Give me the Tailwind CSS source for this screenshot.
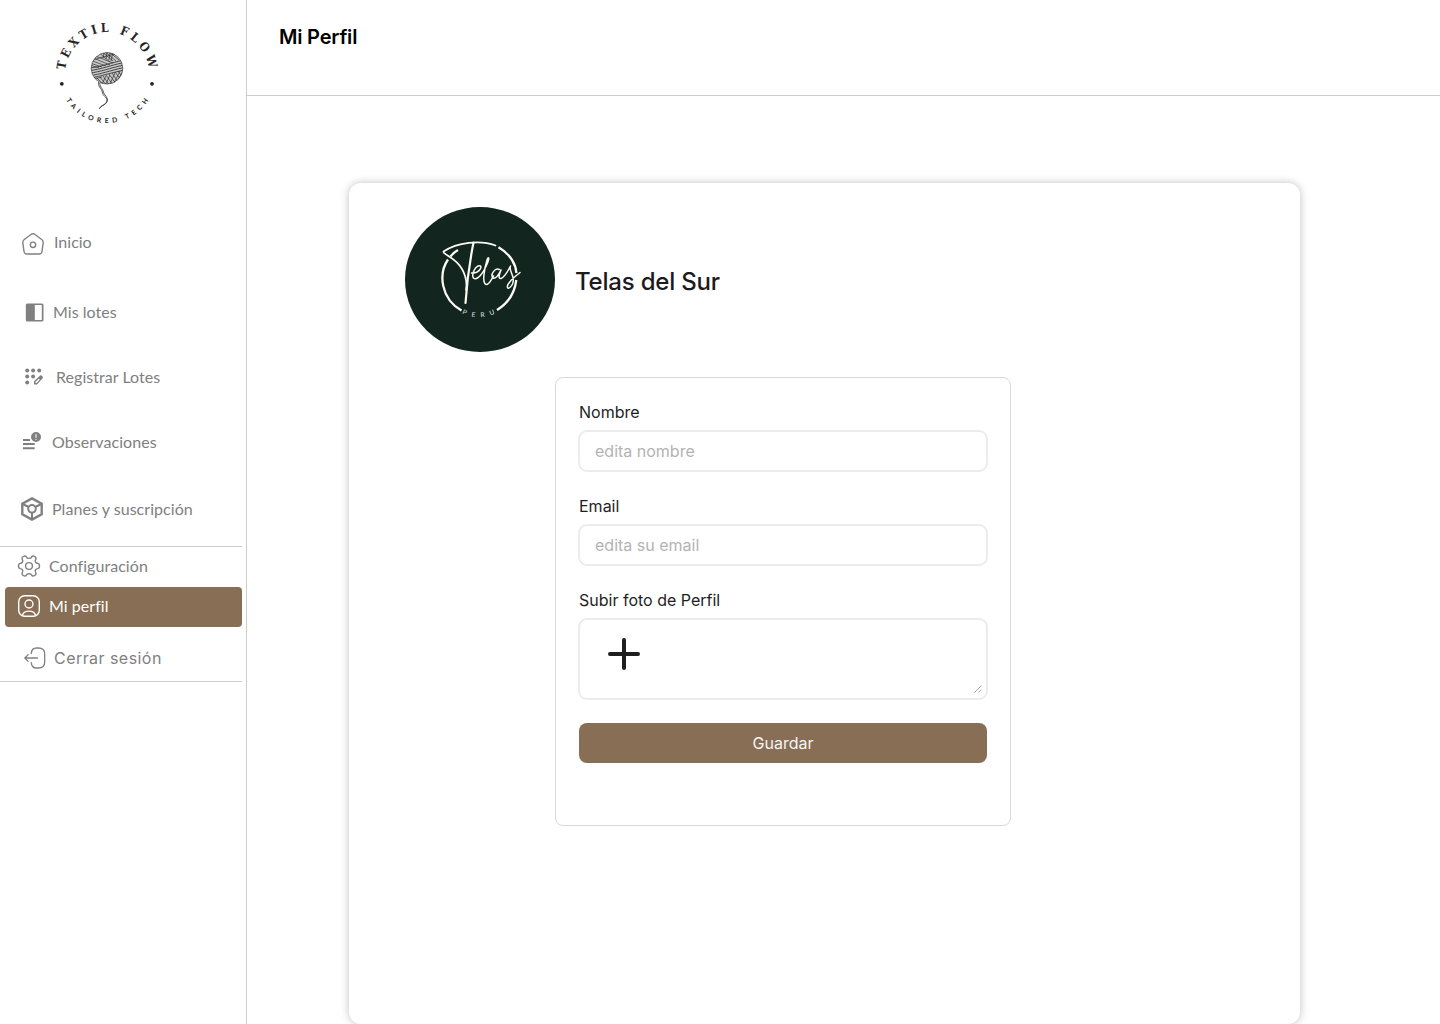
<!DOCTYPE html>
<html lang="es">
<head>
<meta charset="utf-8">
<title>Mi Perfil</title>
<script src="https://cdn.jsdelivr.net/npm/@tailwindcss/browser@4"></script>
</head>
<body class="h-[1024px] w-[1440px] overflow-hidden bg-white flex font-['Inter',sans-serif] text-[#1e1e1e]">

<aside class="w-[247px] h-full shrink-0 border-r border-[#cccccc] flex flex-col text-[#808080]">
  <div class="h-[223px] shrink-0 pl-[47px] pt-[14px]">
    <svg class="w-[120px] h-[120px] text-[#242424]" viewBox="47 14 120 120" fill="none" stroke="currentColor">
      <defs>
        <path id="arcTop" d="M65.300 70A42 42 0 0 1 148.900 70"/>
        <path id="arcBottom" d="M66 100A48.500 48.500 0 0 0 149.500 98.500"/>
        <clipPath id="ball"><circle cx="107" cy="68.300" r="15.800"/></clipPath>
      </defs>
      <text font-family="DejaVu Serif Condensed, DejaVu Serif" font-stretch="condensed" font-weight="bold" font-size="12.300" fill="currentColor" stroke="none"><textPath href="#arcTop" textLength="122" lengthAdjust="spacing">TEXTIL FLOW</textPath></text>
      <text font-family="Lato" font-weight="bold" font-size="6.800" fill="currentColor" stroke="none"><textPath href="#arcBottom" textLength="98" lengthAdjust="spacing">TAILORED TECH</textPath></text>
      <circle cx="61.800" cy="83.800" r="1.900" fill="currentColor" stroke="none"/>
      <circle cx="152" cy="83.800" r="1.900" fill="currentColor" stroke="none"/>
      <g clip-path="url(#ball)" stroke-width=".65">
        <circle cx="107" cy="68.300" r="15.800" fill="#c8c8c8" stroke="none"/>
        <path d="M98 52l12 10M101 51l12 10M104 51l12 10M108 51l11 9M112 51l10 8M116 52l8 7"/>
        <path d="M92 60l30-8M91 57l19 8M90 60l16 6M93 55l20 8M104 53l-1 5M107 52l-1 7M110 52l-1 8M113 52l-2 9"/>
        <path d="M90 68c10-1 20-5 34-8M90 70.500c10-1 20-5 34-8M90 73c10-1 20-5 34-8M90 75.500c10-1 20-5 34-8M91 78c10-2 20-5 33-8" stroke-width=".8"/>
        <path d="M90 63l12 4M90 65l9 3M97 78l7 7M100 77l7 9M103 76l7 10M106 75l7 10M109 74l7 10M112 73l6 9M115 72l6 8M118 71l5 7"/>
        <path d="M101 86l5-10M105 86l5-11M109 86l6-13M113 85l7-14M117 82l6-11M94 79l8-2"/>
      </g>
      <circle cx="107" cy="68.300" r="15.800" stroke-width=".6"/>
      <path d="M98.500 82c0 7 3 5 4 11 1 4 5 4 4.500 8-.4 4-6 4-7.500 7.500M99.700 83c.5 5 3 5 3.700 9 .6 3 4.600 5 4 8.500-.8 4-5 4-8.200 8" stroke-width=".75"/>
    </svg>
  </div>

  <nav class="font-['Lato',sans-serif] text-[16px] flex flex-col">
    <a class="h-10 flex items-center pl-[21px] gap-[9px]">
      <svg class="size-6 mt-0.5" viewBox="0 0 24 24" fill="none" stroke="currentColor" stroke-width="1.400" stroke-linejoin="round"><path d="M10.300 2.300 3 7.700C2 8.500 1.600 9.500 1.800 10.800L3 19.500C3.300 21.300 4.200 22 5.900 22H18.100C19.800 22 20.700 21.300 21 19.500L22.200 10.800C22.400 9.500 22 8.500 21 7.700L13.700 2.300C12.600 1.500 11.400 1.500 10.300 2.300Z"/><circle cx="12" cy="12.800" r="2.700"/></svg>
      <span class="mb-0.5">Inicio</span>
    </a>
    <a class="h-10 mt-[29px] flex items-center pl-[25px] gap-[9px]">
      <svg class="w-[19px] h-[19px] mt-px" viewBox="0 0 19 19" fill="currentColor"><path fill-rule="evenodd" d="M2.300.5h14.700A1.500 1.500 0 0 1 18.500 2v15a1.500 1.500 0 0 1-1.500 1.500h-14.700A1.500 1.500 0 0 1 .8 17V2A1.500 1.500 0 0 1 2.300.5ZM9.800 2v15h7V2Z"/></svg>
      <span class="tracking-[0.03px]">Mis lotes</span>
    </a>
    <a class="h-10 mt-[25px] flex items-center pl-[24px] gap-[12px]">
      <svg class="size-5" viewBox="0 0 20 20" fill="currentColor"><circle cx="3.200" cy="3.500" r="2"/><circle cx="9.100" cy="3.500" r="2"/><circle cx="15.200" cy="3.500" r="2"/><circle cx="3.200" cy="9.500" r="2"/><circle cx="9.100" cy="9.500" r="2"/><circle cx="3.200" cy="15.500" r="2"/><path fill-rule="evenodd" d="M10 17.500v-3.300l6.200-5.800c.8-.6 3.300 1.200 2.700 2.700L13 17.500ZM11.500 16h1.100l3.200-3.500-.9-.8-3.400 3.100Z"/></svg>
      <span class="tracking-[0.04px]">Registrar Lotes</span>
    </a>
    <a class="h-10 mt-[25px] flex items-center pl-[22px] gap-[10px]">
      <svg class="size-5" viewBox="0 0 20 20" fill="currentColor"><path d="M1 7h7v1.900H1zM1 11h11.700v2H1zM1 15.300h11.700v2H1z"/><path fill-rule="evenodd" d="M14 0a5 5 0 1 0 0 10A5 5 0 0 0 14 0Zm-.5 2h1v4h-1Zm0 4.900h1V8h-1Z"/></svg>
      <span class="tracking-[0.08px]">Observaciones</span>
    </a>
    <a class="h-10 mt-[28px] flex items-center pl-[20px] gap-[8px]">
      <svg class="size-6 -mt-0.5" viewBox="0 0 24 24" fill="none" stroke="currentColor" stroke-width="2.400"><path d="M12 1.400 21.700 6.700V17.300L12 22.600 2.300 17.300V6.700Z"/><circle cx="12" cy="11.800" r="3.800" stroke-width="2"/><path d="m2.500 7 6.300 3M21.500 7l-6.300 3M12 15.500V22" stroke-width="2"/></svg>
      <span class="tracking-[0.05px] mb-0.5">Planes y suscripción</span>
    </a>
    <div class="w-[242px] mt-4 border-t border-[#cccccc]"></div>
    <a class="h-10 flex items-center pl-[17px] gap-[8px]">
      <svg class="size-6 -mt-0.5" viewBox="0 0 24 24" fill="none" stroke="currentColor" stroke-width="1.400" stroke-linejoin="round"><path d="M9.500 3.200C10 4.700 14 4.700 14.500 3.200 15 1.600 16.500 1.700 17.700 2.500 19 3.300 19.400 4.300 18.600 5.600 17.500 7.700 19 9.300 20.800 9.400 22.300 9.600 22.500 10.500 22.500 12S22.300 14.400 20.800 14.600C19 14.700 17.500 16.300 18.600 18.400 19.400 19.700 19 20.700 17.700 21.500 16.500 22.300 15 22.400 14.500 20.800 14 19.300 10 19.300 9.500 20.800 9 22.400 7.500 22.300 6.300 21.500 5 20.700 4.600 19.700 5.400 18.400 6.500 16.300 5 14.700 3.200 14.600 1.700 14.400 1.500 13.500 1.500 12S1.700 9.600 3.200 9.400C5 9.300 6.500 7.700 5.400 5.600 4.600 4.300 5 3.300 6.300 2.500 7.500 1.700 9 1.600 9.500 3.200Z"/><circle cx="12" cy="12" r="3.400"/></svg>
      <span class="tracking-[0.05px] mb-0.5">Configuración</span>
    </a>
    <a class="h-10 w-[237px] ml-[5px] rounded bg-[#876e54] text-white flex items-center pl-[12px] gap-[8px]">
      <svg class="size-6 -mt-0.5" viewBox="0 0 24 24" fill="none" stroke="currentColor" stroke-width="1.400" stroke-linecap="round"><rect x="1.700" y="1.700" width="20.600" height="20.600" rx="6"/><circle cx="12" cy="10" r="4"/><path d="M5.500 21.500C6.500 15.600 17.500 15.600 18.500 21.500"/></svg>
      <span class="tracking-[0.05px] mb-0.5">Mi perfil</span>
    </a>
    <a class="h-10 mt-[11px] flex items-center pl-[23px] gap-[7px] font-['Inter',sans-serif]">
      <svg class="size-6" viewBox="0 0 24 24" fill="none" stroke="currentColor" stroke-width="1.300" stroke-linecap="round" stroke-linejoin="round"><path d="M8.300 7.500C8.500 3.500 10 2 13.500 2H15.500C20 2 21.700 3.800 21.700 8V16C21.700 20.200 20 22 15.500 22H13.500C10 22 8.500 20.500 8.300 16.600M14.500 12H2M5.200 8.600 1.800 12 5.200 15.400"/></svg>
      <span class="tracking-[0.45px]">Cerrar sesión</span>
    </a>
    <div class="w-[242px] mt-[3px] border-t border-[#cccccc]"></div>
  </nav>
</aside>

<main class="flex-1 flex flex-col">
  <header class="h-24 shrink-0 border-b border-[#cccccc] pl-8 pt-[22px]">
    <h1 class="text-[20px] leading-[30px] font-semibold tracking-[-0.2px] text-black">Mi Perfil</h1>
  </header>

  <section class="mt-[87px] ml-[102px] w-[951px] h-[841px] shrink-0 rounded-xl bg-white shadow-[0_0_8px_rgba(0,0,0,0.25)]">
    <div class="pt-6 pl-14 flex items-center gap-[20px]">
      <svg class="w-[150px] h-[145px]" viewBox="405 207 150 145" fill="none" stroke="#fbfaf3" stroke-linecap="round" stroke-linejoin="round">
        <ellipse cx="480" cy="279.500" rx="75" ry="72.500" fill="#12261f" stroke="none"/>
        <defs><path id="peru" d="M462 313.500Q480 321.500 497 312.500"/></defs>
        <path d="M498.500 247.200C511 254.500 516 265 516.400 273M516.300 280C514.500 294 507 304 497 310M461.500 310.500C441 299 438 274 448 259.500M450.500 256.500Q453.500 252.500 458 250" stroke-width="2.300" stroke-linecap="butt"/>
        <path d="M495.500 245.500C480 239.500 457 242.500 443.500 251.500 442 254 456 257.500 462 269 466 276 467 284 466 290" stroke-width="1.700"/>
        <path d="M473.500 242.500C470 260 467 280 465.500 303" stroke-width="2.200"/>
        <path d="M471.500 273C478 274 482 268 480.500 266 476 264.500 471 274 473.500 278 477 281 483 274 487.500 263 490 257 488 256.500 487 260 484 270 482 283 486 284.500 489 285 491 280 493.500 276M499.500 269.500C495 267 490 275 493 278 496 279.500 499 274 501 270 499 275 498 279 501 278.500 505 277 508 271 510.500 266 508 271 516 276 512.500 284 509 291 505 288 509 283 512 278 516 276 520 272.500" stroke-width="1.500"/>
        <text font-family="Lato" font-size="6.500" fill="#e8ece6" stroke="none"><textPath href="#peru" textLength="34" lengthAdjust="spacing">PERU</textPath></text>
      </svg>
      <h2 class="text-[24px] leading-8 font-medium tracking-[-0.2px] text-[#1d1b20] mt-1">Telas del Sur</h2>
    </div>

    <form class="ml-[206px] mt-[25px] w-[456px] h-[449px] rounded-lg border border-[#d9d9d9] pt-[23px] px-[22px] flex flex-col text-[16px]">
      <label class="leading-[22px] pl-px">Nombre</label>
      <div class="mt-[7px] h-[42px] rounded-[9px] border-2 border-[#ececec] px-[15px] flex items-center text-[#b3b3b3]">edita nombre</div>
      <label class="leading-[22px] pl-px mt-[23px]">Email</label>
      <div class="mt-[7px] h-[42px] rounded-[9px] border-2 border-[#ececec] px-[15px] flex items-center text-[#b3b3b3]">edita su email</div>
      <label class="leading-[22px] pl-px mt-[23px]">Subir foto de Perfil</label>
      <div class="mt-[7px] h-[82px] rounded-[9px] border-2 border-[#ececec] pl-7 pr-1 pt-[18px] pb-[5px] flex justify-between">
        <svg class="size-8" viewBox="0 0 32 32" stroke="#1e1e1e" stroke-width="4" stroke-linecap="round"><path d="M16 2V30M2 16H30"/></svg>
        <svg class="size-2 self-end" viewBox="0 0 8 8" stroke="#a8a8a8" stroke-width="1"><path d="M.5 7.500 7.500.5M4.500 7.500 7.500 4.500"/></svg>
      </div>
      <button type="button" class="mt-[23px] mx-px h-10 rounded-lg bg-[#876e54] text-[#f5f5f5]">Guardar</button>
    </form>
  </section>
</main>
</body>
</html>
